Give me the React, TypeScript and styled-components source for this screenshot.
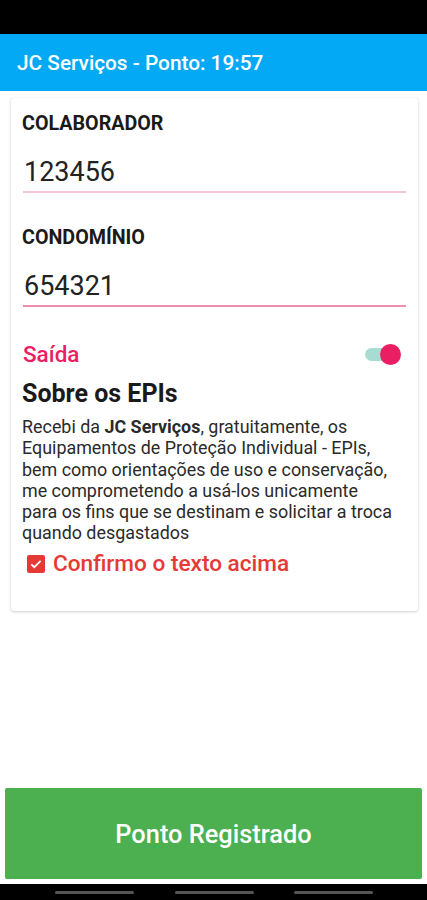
import React, { useState } from 'react';
import styled, { createGlobalStyle } from 'styled-components';

const GlobalStyle = createGlobalStyle`
  html, body {
    margin: 0;
    padding: 0;
    background: #ffffff;
    font-family: Roboto, "Noto Sans", "Liberation Sans", sans-serif;
  }
  * { box-sizing: border-box; }
`;

const Screen = styled.div`
  width: 427px;
  height: 900px;
  display: flex;
  flex-direction: column;
  background: #ffffff;
  overflow: hidden;
`;

const StatusBar = styled.div`
  height: 34px;
  background: #000000;
  flex-shrink: 0;
`;

const AppBar = styled.header`
  height: 57px;
  background: #03a9f4;
  display: flex;
  align-items: center;
  padding-left: 17px;
  color: #ffffff;
  font-size: 20.8px;
  font-weight: 500;
  flex-shrink: 0;
`;

const Content = styled.main`
  padding: 7px 9px 0 11px;
  flex: 1;
`;

const Card = styled.section`
  background: #ffffff;
  border-radius: 3px;
  box-shadow: 0 1px 3px rgba(0, 0, 0, 0.18), 0 0 1px rgba(0, 0, 0, 0.08);
  padding: 13px 12px 34px 11px;
  display: flex;
  flex-direction: column;
`;

const FieldLabel = styled.div`
  font-size: 19.7px;
  font-weight: 700;
  color: #1a1a1a;
  line-height: 26px;
`;

const FieldInput = styled.div<{ $line: string }>`
  margin: 16px 0 32px 1px;
  font-size: 27px;
  color: #222222;
  line-height: 38px;
  border-bottom: 2px solid ${(p) => p.$line};
  padding-left: 1px;
`;

const ToggleRow = styled.div`
  display: flex;
  align-items: center;
  justify-content: space-between;
  margin-top: 2px;
  height: 26px;
`;

const ToggleLabel = styled.span`
  font-size: 22.5px;
  font-weight: 500;
  color: #e91e63;
  line-height: 26px;
  padding-left: 1px;
`;

const Track = styled.div`
  position: relative;
  width: 26px;
  height: 13px;
  border-radius: 7px;
  background: #a8dcd3;
  margin-right: 15px;
`;

const Thumb = styled.div`
  position: absolute;
  right: -10px;
  top: -4px;
  width: 21px;
  height: 21px;
  border-radius: 50%;
  background: #e91e63;
`;

const Heading = styled.h2`
  margin: 12px 0 7px;
  font-size: 25px;
  font-weight: 700;
  color: #1a1a1a;
  line-height: 30px;
`;

const Paragraph = styled.p`
  margin: 0;
  font-size: 17.9px;
  line-height: 21.3px;
  color: #2a2a2a;
  white-space: nowrap;
`;

const ConfirmRow = styled.label`
  display: flex;
  align-items: center;
  gap: 8px;
  margin-top: 7px;
  padding-left: 5px;
  color: #e53935;
  font-size: 22.6px;
  font-weight: 500;
  line-height: 26px;
`;

const Box = styled.span`
  width: 18px;
  height: 18px;
  border-radius: 2px;
  background: #e53935;
  display: inline-flex;
  align-items: center;
  justify-content: center;
`;

const Footer = styled.div`
  padding: 0 5px 5px;
  flex-shrink: 0;
`;

const RegisterButton = styled.button`
  width: 100%;
  height: 91px;
  border: none;
  border-radius: 2px;
  background: #4caf50;
  color: #ffffff;
  font-family: Roboto, "Liberation Sans", sans-serif;
  font-size: 25.4px;
  font-weight: 500;
`;

const NavBar = styled.div`
  height: 16px;
  background: #000000;
  display: flex;
  justify-content: space-between;
  align-items: center;
  padding: 0 54px 0 55px;
  flex-shrink: 0;
`;

const NavHandle = styled.div`
  width: 79px;
  height: 3px;
  border-radius: 2px;
  background: #555555;
`;

export default function App() {
  const [checked] = useState(true);

  return (
    <Screen>
      <GlobalStyle />
      <StatusBar />
      <AppBar>JC Serviços - Ponto: 19:57</AppBar>
      <Content>
        <Card>
          <FieldLabel>COLABORADOR</FieldLabel>
          <FieldInput $line="#f4c6d6">123456</FieldInput>
          <FieldLabel>CONDOMÍNIO</FieldLabel>
          <FieldInput $line="#ec8eab">654321</FieldInput>
          <ToggleRow>
            <ToggleLabel>Saída</ToggleLabel>
            <Track>
              <Thumb />
            </Track>
          </ToggleRow>
          <Heading>Sobre os EPIs</Heading>
          <Paragraph>
            Recebi da <b>JC Serviços</b>, gratuitamente, os
            <br />
            Equipamentos de Proteção Individual - EPIs,
            <br />
            bem como orientações de uso e conservação,
            <br />
            me comprometendo a usá-los unicamente
            <br />
            para os fins que se destinam e solicitar a troca
            <br />
            quando desgastados
          </Paragraph>
          <ConfirmRow>
            <Box>
              {checked && (
                <svg width="14" height="14" viewBox="0 0 24 24">
                  <path d="M4 12.5l5 5L20 6.5" fill="none" stroke="#ffffff" strokeWidth="3" />
                </svg>
              )}
            </Box>
            Confirmo o texto acima
          </ConfirmRow>
        </Card>
      </Content>
      <Footer>
        <RegisterButton>Ponto Registrado</RegisterButton>
      </Footer>
      <NavBar>
        <NavHandle />
        <NavHandle />
        <NavHandle />
      </NavBar>
    </Screen>
  );
}
